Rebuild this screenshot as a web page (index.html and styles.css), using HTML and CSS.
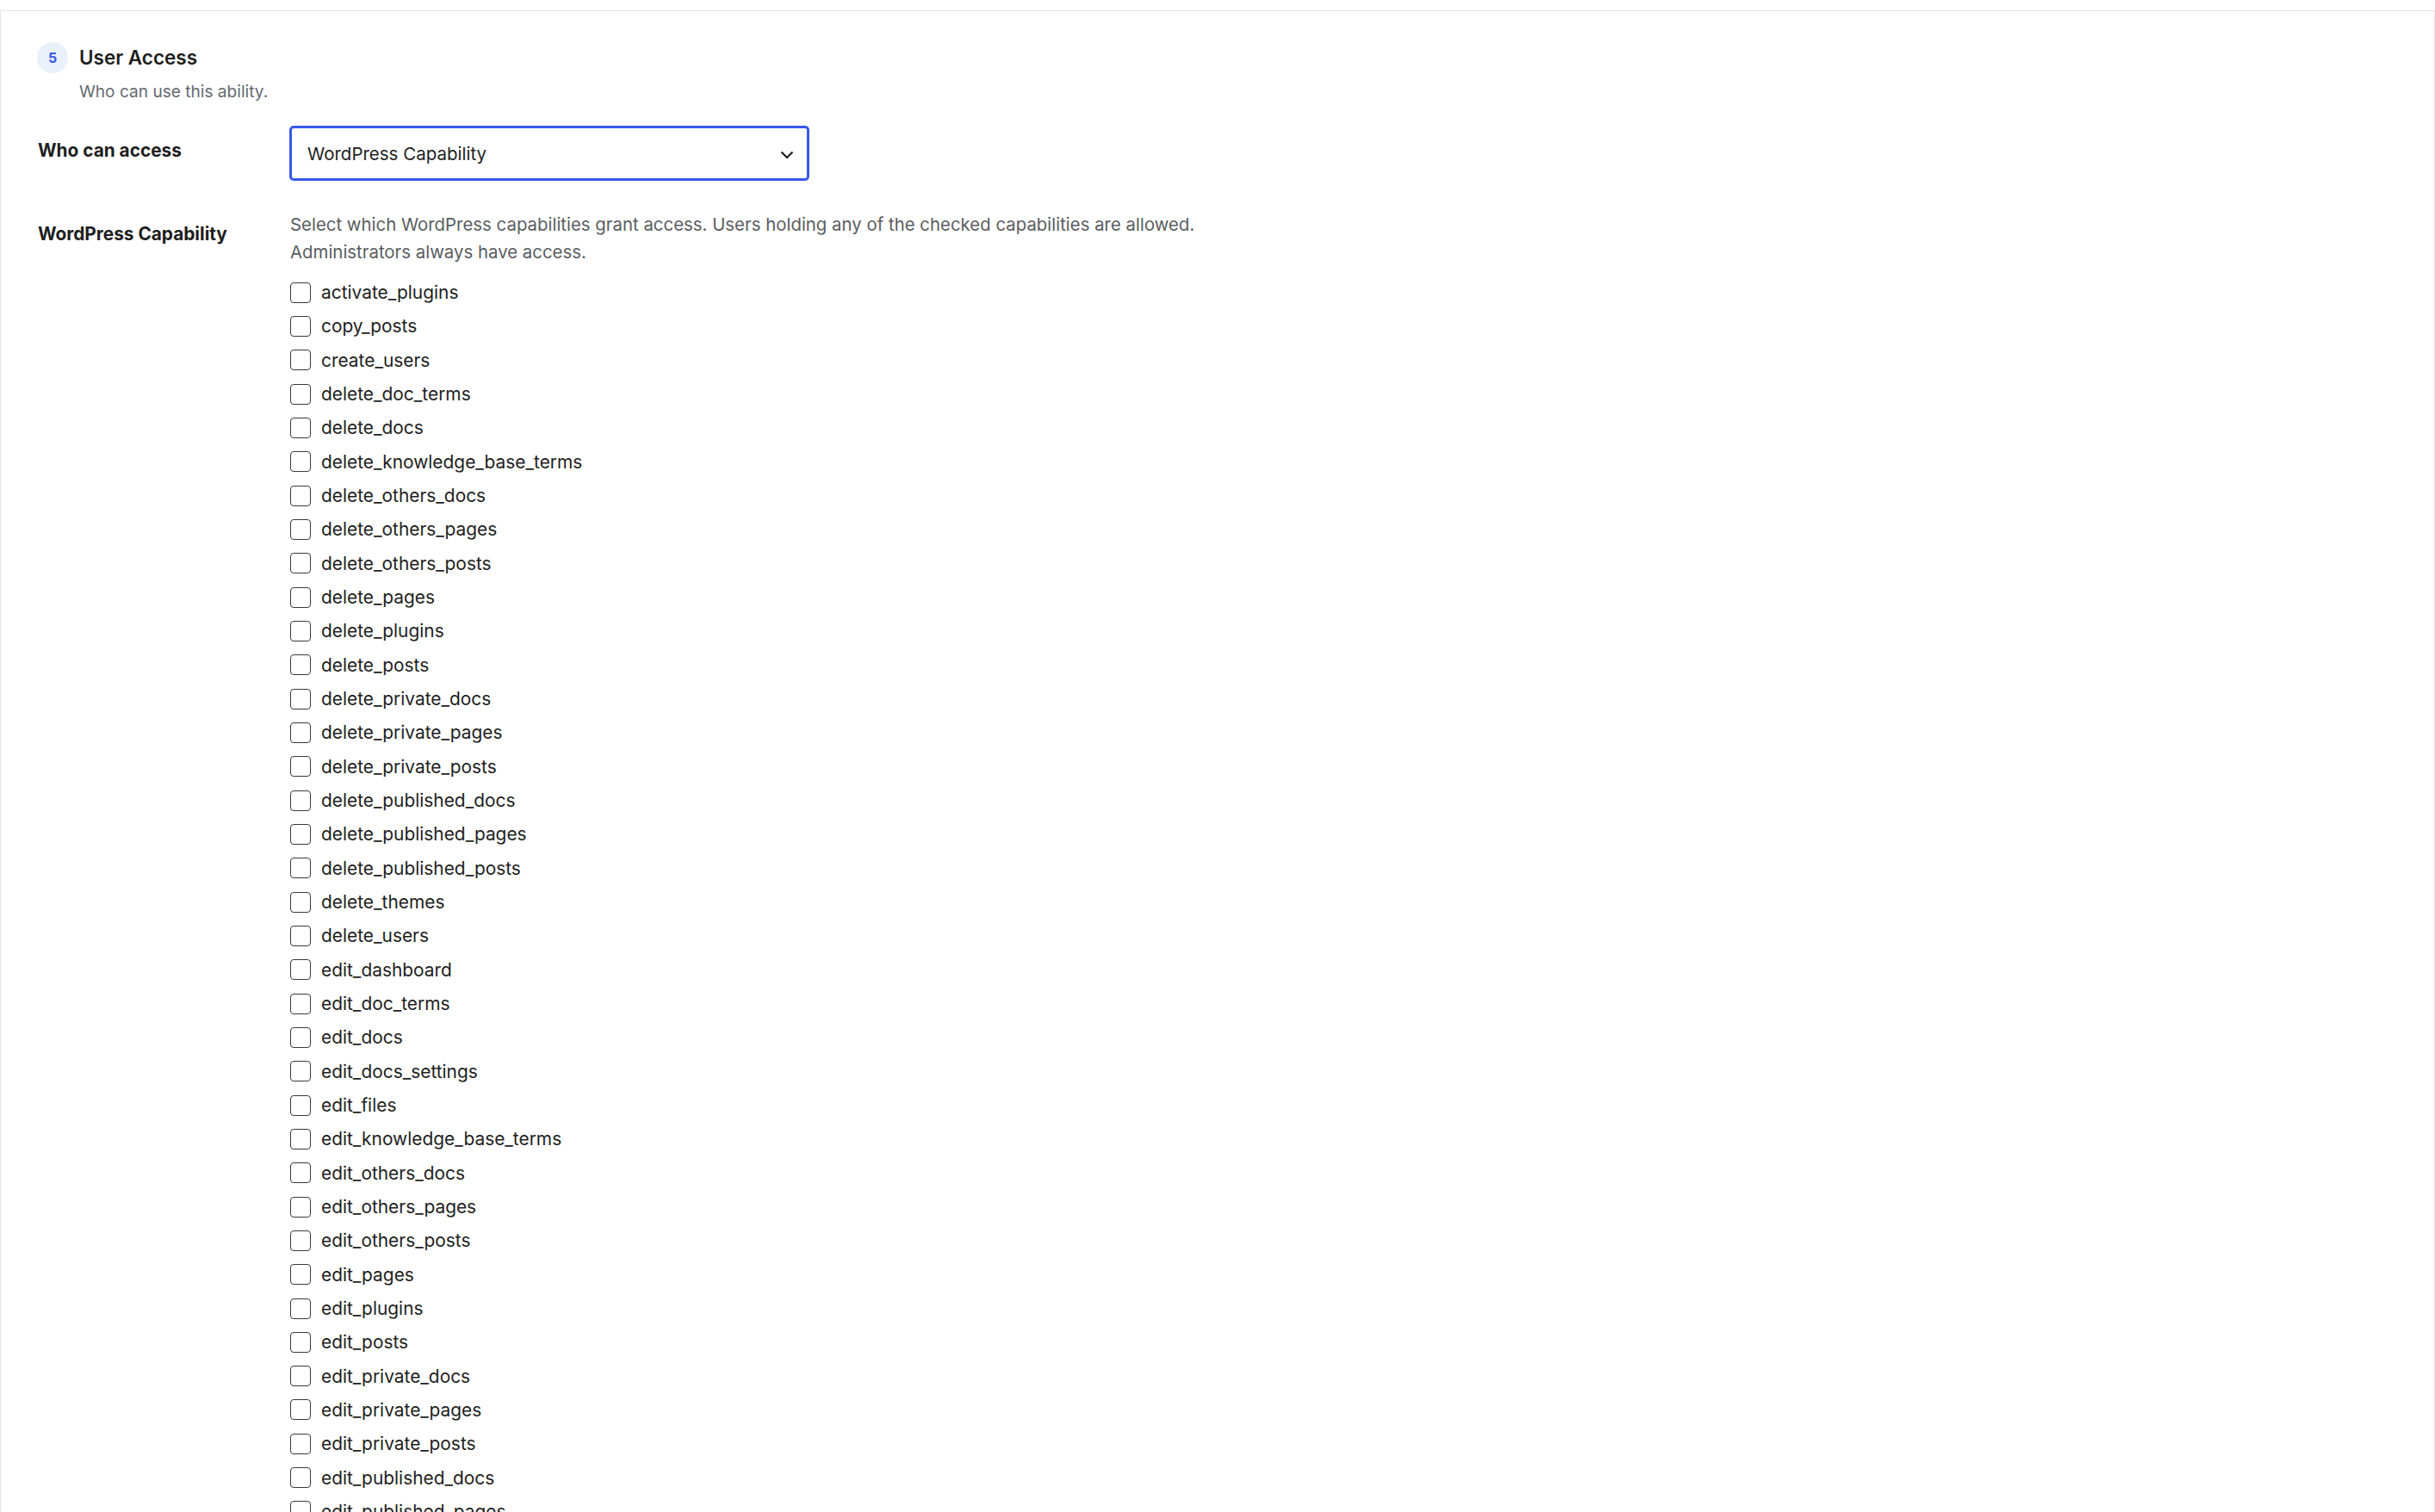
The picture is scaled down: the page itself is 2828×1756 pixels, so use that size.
FILE: index.html
```html
<!DOCTYPE html>
<html lang="en">
<head>
    <meta charset="UTF-8">
    <meta name="viewport" content="width=device-width, initial-scale=1.0">
    <title>Ability Settings - User Access</title>
    <link rel="stylesheet" href="styles.css">
</head>
<body>
    <div class="panel">
        <section class="step">
            <!-- Step heading -->
            <div class="step-head">
                <span class="step-num">5</span>
                <h2 class="step-title">User Access</h2>
            </div>
            <p class="step-desc">Who can use this ability.</p>

            <!-- Access type -->
            <div class="field-row">
                <label class="field-label" for="accessType">Who can access</label>
                <div class="field-control">
                    <div class="select-wrap">
                        <select id="accessType" class="select">
                            <option>Everyone</option>
                            <option>Logged-in Users</option>
                            <option>User Roles</option>
                            <option selected>WordPress Capability</option>
                        </select>
                        <svg class="select-arrow" width="16" height="10" viewBox="0 0 16 10" aria-hidden="true">
                            <polyline points="1.5,1.5 8,8 14.5,1.5" fill="none" stroke="#1e1e1e" stroke-width="2.2"/>
                        </svg>
                    </div>
                </div>
            </div>

            <!-- Capability list -->
            <div class="field-row field-row-caps">
                <span class="field-label">WordPress Capability</span>
                <div class="field-control">
                    <p class="help">Select which WordPress capabilities grant access. Users holding any of the checked capabilities are allowed. Administrators always have access.</p>
                    <ul class="cap-list">
                        <li><label><input type="checkbox" name="caps[]" value="activate_plugins"> activate_plugins</label></li>
                        <li><label><input type="checkbox" name="caps[]" value="copy_posts"> copy_posts</label></li>
                        <li><label><input type="checkbox" name="caps[]" value="create_users"> create_users</label></li>
                        <li><label><input type="checkbox" name="caps[]" value="delete_doc_terms"> delete_doc_terms</label></li>
                        <li><label><input type="checkbox" name="caps[]" value="delete_docs"> delete_docs</label></li>
                        <li><label><input type="checkbox" name="caps[]" value="delete_knowledge_base_terms"> delete_knowledge_base_terms</label></li>
                        <li><label><input type="checkbox" name="caps[]" value="delete_others_docs"> delete_others_docs</label></li>
                        <li><label><input type="checkbox" name="caps[]" value="delete_others_pages"> delete_others_pages</label></li>
                        <li><label><input type="checkbox" name="caps[]" value="delete_others_posts"> delete_others_posts</label></li>
                        <li><label><input type="checkbox" name="caps[]" value="delete_pages"> delete_pages</label></li>
                        <li><label><input type="checkbox" name="caps[]" value="delete_plugins"> delete_plugins</label></li>
                        <li><label><input type="checkbox" name="caps[]" value="delete_posts"> delete_posts</label></li>
                        <li><label><input type="checkbox" name="caps[]" value="delete_private_docs"> delete_private_docs</label></li>
                        <li><label><input type="checkbox" name="caps[]" value="delete_private_pages"> delete_private_pages</label></li>
                        <li><label><input type="checkbox" name="caps[]" value="delete_private_posts"> delete_private_posts</label></li>
                        <li><label><input type="checkbox" name="caps[]" value="delete_published_docs"> delete_published_docs</label></li>
                        <li><label><input type="checkbox" name="caps[]" value="delete_published_pages"> delete_published_pages</label></li>
                        <li><label><input type="checkbox" name="caps[]" value="delete_published_posts"> delete_published_posts</label></li>
                        <li><label><input type="checkbox" name="caps[]" value="delete_themes"> delete_themes</label></li>
                        <li><label><input type="checkbox" name="caps[]" value="delete_users"> delete_users</label></li>
                        <li><label><input type="checkbox" name="caps[]" value="edit_dashboard"> edit_dashboard</label></li>
                        <li><label><input type="checkbox" name="caps[]" value="edit_doc_terms"> edit_doc_terms</label></li>
                        <li><label><input type="checkbox" name="caps[]" value="edit_docs"> edit_docs</label></li>
                        <li><label><input type="checkbox" name="caps[]" value="edit_docs_settings"> edit_docs_settings</label></li>
                        <li><label><input type="checkbox" name="caps[]" value="edit_files"> edit_files</label></li>
                        <li><label><input type="checkbox" name="caps[]" value="edit_knowledge_base_terms"> edit_knowledge_base_terms</label></li>
                        <li><label><input type="checkbox" name="caps[]" value="edit_others_docs"> edit_others_docs</label></li>
                        <li><label><input type="checkbox" name="caps[]" value="edit_others_pages"> edit_others_pages</label></li>
                        <li><label><input type="checkbox" name="caps[]" value="edit_others_posts"> edit_others_posts</label></li>
                        <li><label><input type="checkbox" name="caps[]" value="edit_pages"> edit_pages</label></li>
                        <li><label><input type="checkbox" name="caps[]" value="edit_plugins"> edit_plugins</label></li>
                        <li><label><input type="checkbox" name="caps[]" value="edit_posts"> edit_posts</label></li>
                        <li><label><input type="checkbox" name="caps[]" value="edit_private_docs"> edit_private_docs</label></li>
                        <li><label><input type="checkbox" name="caps[]" value="edit_private_pages"> edit_private_pages</label></li>
                        <li><label><input type="checkbox" name="caps[]" value="edit_private_posts"> edit_private_posts</label></li>
                        <li><label><input type="checkbox" name="caps[]" value="edit_published_docs"> edit_published_docs</label></li>
                        <li><label><input type="checkbox" name="caps[]" value="edit_published_pages"> edit_published_pages</label></li>
                        <li><label><input type="checkbox" name="caps[]" value="edit_published_posts"> edit_published_posts</label></li>
                        <li><label><input type="checkbox" name="caps[]" value="edit_theme_options"> edit_theme_options</label></li>
                        <li><label><input type="checkbox" name="caps[]" value="edit_themes"> edit_themes</label></li>
                        <li><label><input type="checkbox" name="caps[]" value="edit_users"> edit_users</label></li>
                        <li><label><input type="checkbox" name="caps[]" value="export"> export</label></li>
                    </ul>
                </div>
            </div>
        </section>
    </div>
</body>
</html>
```

FILE: styles.css
```css
/* Reset */
* {
    margin: 0;
    padding: 0;
    box-sizing: border-box;
}

body {
    font-family: Inter, "Noto Sans", sans-serif;
    color: #1e1e1e;
    background-color: #fff;
}

/* Settings panel */
.panel {
    margin-top: 12px;
    border: 1px solid #e4e4e4;
    border-bottom: none;
    min-height: 100vh;
}

.step {
    padding: 36px 0 40px 42px;
}

/* Step heading with number badge */
.step-head {
    display: flex;
    align-items: center;
    gap: 13px;
}

.step-num {
    width: 36px;
    height: 36px;
    border-radius: 50%;
    background-color: #eaf0fa;
    color: #3858e9;
    font-size: 16px;
    font-weight: 700;
    display: flex;
    align-items: center;
    justify-content: center;
}

.step-title {
    font-size: 22.5px;
    font-weight: 600;
    line-height: 36px;
}

.step-desc {
    margin: 7px 0 0 49px;
    font-size: 19.1px;
    line-height: 28px;
    color: #646970;
}

/* Label / control rows */
.field-row {
    display: grid;
    grid-template-columns: 293px 1fr;
    margin-top: 26px;
}

.field-row-caps {
    margin-top: 35px;
}

.field-label {
    font-size: 20.8px;
    font-weight: 700;
    line-height: 28px;
    padding: 15px 0 0 1px;
}

.field-row-caps .field-label {
    padding-top: 13px;
}

/* Select */
.select-wrap {
    position: relative;
    width: 604px;
}

.select {
    width: 100%;
    height: 64px;
    border: 3px solid #3858e9;
    border-radius: 5px;
    background-color: #fff;
    padding: 0 48px 0 18px;
    font-family: inherit;
    font-size: 20.5px;
    color: #1e1e1e;
    appearance: none;
    -webkit-appearance: none;
    outline: none;
}

.select-arrow {
    position: absolute;
    right: 18px;
    top: 29px;
    pointer-events: none;
}

/* Help text */
.help {
    max-width: 1110px;
    font-size: 20.4px;
    line-height: 32px;
    color: #5a5d61;
    padding-left: 1px;
}

/* Capability checkboxes */
.cap-list {
    list-style: none;
    margin-top: 11px;
}

.cap-list li {
    height: 39.33px;
    display: flex;
    align-items: center;
}

.cap-list label {
    display: flex;
    align-items: center;
    gap: 12px;
    font-size: 20.9px;
    color: #1e1e1e;
    cursor: pointer;
}

.cap-list input[type="checkbox"] {
    appearance: none;
    -webkit-appearance: none;
    width: 24px;
    height: 24px;
    margin-left: 1px;
    border: 1.6px solid #3a3a3a;
    border-radius: 4px;
    background-color: #fff;
    cursor: pointer;
}
```
